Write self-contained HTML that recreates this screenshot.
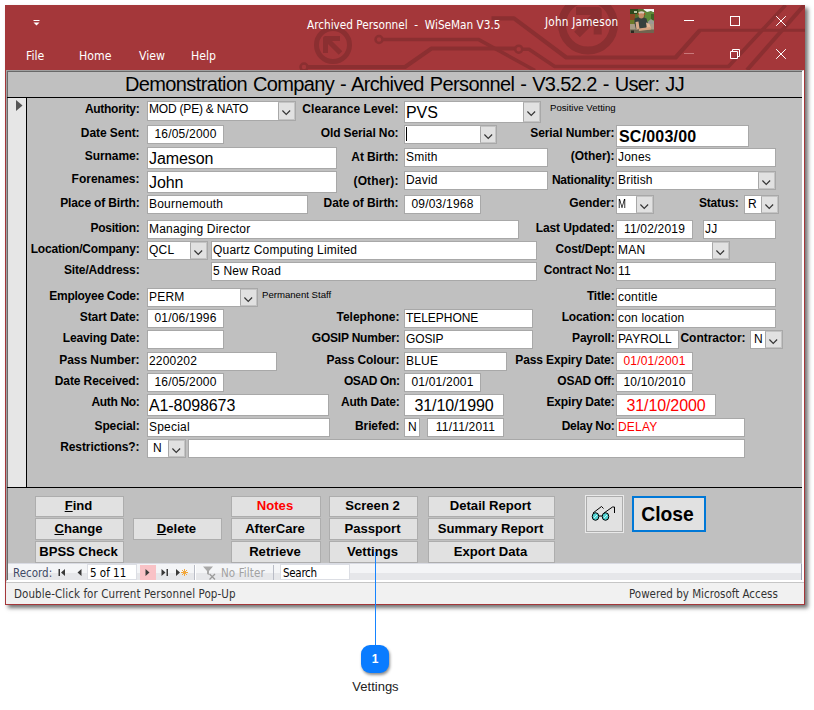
<!DOCTYPE html>
<html lang="en"><head><meta charset="utf-8"><title>Archived Personnel - WiSeMan V3.5</title>
<style>
*{box-sizing:border-box;margin:0;padding:0}
html,body{width:814px;height:710px;background:#fff;overflow:hidden}
body{position:relative;font-family:"Liberation Sans",Arial,sans-serif;font-size:12px;color:#000}
.a{position:absolute;white-space:pre}
#win{left:5px;top:5px;width:800px;height:600px;background:#a4373a;box-shadow:3px 3px 4px 0 rgba(0,0,0,.55)}
.tt{color:#fff;font-family:'DejaVu Sans Condensed','Liberation Sans',sans-serif;font-size:11.7px;line-height:16px}
.mn{color:#fff;font-family:'DejaVu Sans Condensed','Liberation Sans',sans-serif;font-size:12.2px;line-height:16px}
#form{left:1px;top:65px;width:798px;height:512px;background:#c0c0c0;border-left:1px solid #a0a0a0;border-top:1px solid #a0a0a0;border-right:2px solid #fff;border-bottom:2px solid #fff}
.f{background:#fff;border:1px solid #a8a8a8;font-size:12px;line-height:14px;padding-left:1px;overflow:hidden;letter-spacing:0.2px}
.l{font-weight:bold;font-size:12px;line-height:14px;text-align:right;letter-spacing:-0.25px}
.cb{background:#e1e1e1;border:1px solid #c4c4c4;border-left-color:#a8a8a8}
.b{background:#e1e1e1;border:1px solid #adadad;font-weight:bold;font-size:13.1px;line-height:18px;text-align:center;padding-right:2px}
.r{color:#f00}
.c{text-align:center;padding-left:0}
u{text-decoration-thickness:1px;text-underline-offset:1px}
</style></head>
<body>
<div id="win" class="a">
<svg class="a" style="left:0;top:0" width="800" height="65" viewBox="0 0 800 65" fill="none" stroke="#8b2f31" stroke-width="4" stroke-linejoin="round">
<circle cx="328" cy="40" r="16.5" stroke-width="5"/><path d="M335.5 48 L322 34.5 M320.5 48 V33.5 H335" stroke-width="5"/>
<circle cx="374" cy="34.5" r="3.5" stroke-width="2.5"/><path d="M378 34.600 H473.800 L530 65.5" stroke-width="3.5"/>
<circle cx="299" cy="62" r="3.5" stroke-width="2.5"/><path d="M303 62 H400 L426.5 43.5 H510" stroke-width="4"/>
<circle cx="513.700" cy="44.200" r="3.5" stroke-width="2.5"/><path d="M517.700 44.200 H524 L549.700 61.5 H723.5 L780.600 0" stroke-width="3.600"/>
<path d="M486.5 13.400 H509 L561.300 52.5 H670.600 L694.700 25.300" stroke-width="4.200"/><path d="M693.5 25.300 H800" stroke-width="3"/>
<circle cx="583" cy="19.600" r="26" stroke-width="8"/><path d="M572 29.5 L590.5 11 M571 6 H592.700 V29.5" stroke-width="8"/>
<path d="M742 65 L799.300 0" stroke-width="4"/>
</svg>
<svg class="a" style="left:28px;top:14px" width="8" height="8" viewBox="0 0 8 8"><rect x="0.5" y="1" width="6" height="1" fill="#fff"/><path d="M0.5 3.5 H6.5 L3.5 6.5 Z" fill="#fff"/></svg>
<div class="a tt" style="left:302px;top:12px;letter-spacing:0">Archived Personnel  -  WiSeMan V3.5</div>
<div class="a tt" style="left:540px;top:9px;letter-spacing:0.2px">John Jameson</div>
<svg class="a" style="left:625px;top:4px" width="24" height="24" viewBox="0 0 24 24">
<defs><filter id="bl" x="-10%" y="-10%" width="120%" height="120%"><feGaussianBlur stdDeviation="0.550"/></filter><clipPath id="av"><rect width="24" height="24"/></clipPath></defs>
<g clip-path="url(#av)"><rect width="24" height="24" fill="#55702f"/><g filter="url(#bl)">
<rect x="-1" y="-1" width="9" height="6" fill="#2f4a1c"/><rect x="4" y="2" width="3" height="2" fill="#b9c3a0"/>
<path d="M13 -1 H25 V4 L21 2 L17 3 L14 1 Z" fill="#f4f6f4"/>
<rect x="15" y="3" width="10" height="10" fill="#5f8a38"/><rect x="21" y="5" width="4" height="6" fill="#3f6426"/>
<rect x="-1" y="5" width="6" height="7" fill="#8b4722"/><rect x="-1" y="11" width="6" height="4" fill="#6d7a2c"/>
<path d="M17.5 13 L21 10 L25 13 V19 H17.5 Z" fill="#9c9a92"/>
<rect x="-1" y="15" width="26" height="6" fill="#a99c86"/><rect x="-1" y="20.5" width="26" height="4.5" fill="#6f644f"/>
<path d="M4.5 9.5 Q10.5 7 16.5 9.5 L18 16 L15 20.5 H6 L4.5 14 Z" fill="#363f3c"/>
<ellipse cx="11.300" cy="6.300" rx="2.700" ry="3.300" fill="#c48a66"/><path d="M8 5 Q8 2.5 11.5 2.200 Q15 2.5 14.700 5 Q11.5 3.600 8 5 Z" fill="#d9cbbd"/>
<rect x="7.600" y="4" width="1.200" height="2" fill="#a8501e"/><rect x="14" y="4" width="1.200" height="2" fill="#a8501e"/>
<path d="M5.5 13 L8.5 12.5 L9.5 19.5 L6.5 21 Z" fill="#d9aa8a"/>
<path d="M16 13.5 L19.5 15 L21 19 L17 20 Z" fill="#e2b898"/>
<path d="M8.5 19.5 L20.5 18 L21 20.5 L9 22 Z" fill="#d3a07e"/>
<rect x="1" y="21.5" width="3" height="2.5" fill="#2a2a24"/></g></g>
</svg>
<svg class="a" style="left:670px;top:4px" width="125" height="56" viewBox="0 0 125 56" fill="none" stroke="#fff" stroke-width="1">
<path d="M9 11.5 H19"/><rect x="55.5" y="7.5" width="9" height="9"/><path d="M101.5 7.5 L110.5 16.5 M110.5 7.5 L101.5 16.5" stroke-linecap="square"/>
<path d="M9 44.5 H19" stroke="#c9787a"/>
<path d="M55.5 42.5 H62.5 V49.5 H55.5 Z M57.5 42.5 V40.5 H64.5 V47.5 H62.5" /><path d="M101.5 40.5 L110.5 49.5 M110.5 40.5 L101.5 49.5" stroke-linecap="square"/>
</svg>
<div class="a mn" style="left:21px;top:43px">File</div>
<div class="a mn" style="left:74px;top:43px">Home</div>
<div class="a mn" style="left:134px;top:43px">View</div>
<div class="a mn" style="left:186px;top:43px">Help</div>
<div id="form" class="a">
<div class="a" style="left:0;top:0;width:795px;height:26px;border-left:1px solid #696969;border-top:1px solid #696969;text-align:center;font-size:20px;line-height:24px;letter-spacing:-0.62px;word-spacing:1px;padding-right:1px">Demonstration Company - Archived Personnel - V3.52.2 - User: JJ</div>
<div class="a" style="left:0;top:26px;width:795px;height:1px;background:#000"></div>
<div class="a" style="left:0;top:27px;width:20px;height:389px;background:#e6e6e6;border-left:1px solid #696969;border-right:1px solid #000"></div>
<svg class="a" style="left:9px;top:29px" width="7" height="11" viewBox="0 0 7 11"><path d="M0 0 L6.5 5.5 L0 11 Z" fill="#555"/></svg>
<div class="a" style="left:0;top:416px;width:795px;height:1px;background:#000"></div>
<div class="a" style="left:0;top:417px;width:1px;height:92px;background:#696969"></div>
<div class="a l" style="right:662.5px;top:31px;letter-spacing:-0.27px;">Authority:</div>
<div class="a f " style="left:140px;top:30px;width:149px;height:20px;line-height:14px;letter-spacing:-0.2px">MOD (PE) &amp; NATO<div class="a cb" style="right:0;top:0;width:17px;height:18px"><svg class="a" style="left:3px;top:7px" width="9" height="6" viewBox="0 0 9 6"><path d="M0.400 0.5 L4.250 4.350 L8.100 0.5" fill="none" stroke="#333" stroke-width="1.150"/></svg></div></div>
<div class="a l" style="right:403.5px;top:31px;letter-spacing:0.05px;">Clearance Level:</div>
<div class="a f " style="left:397px;top:30px;width:137px;height:22px;line-height:22px;font-size:16px;letter-spacing:-0.1px">PVS<div class="a cb" style="right:0;top:0;width:17px;height:20px"><svg class="a" style="left:3px;top:8px" width="9" height="6" viewBox="0 0 9 6"><path d="M0.400 0.5 L4.250 4.350 L8.100 0.5" fill="none" stroke="#333" stroke-width="1.150"/></svg></div></div>
<div class="a" style="left:543px;top:31px;font-size:9.6px;line-height:11px">Positive Vetting</div>
<div class="a l" style="right:662.5px;top:55px;letter-spacing:-0.07px;">Date Sent:</div>
<div class="a f c" style="left:140px;top:54px;width:77px;height:19px;line-height:17px;">16/05/2000</div>
<div class="a l" style="right:403.5px;top:55px;letter-spacing:-0.11px;">Old Serial No:</div>
<div class="a f " style="left:397px;top:54px;width:93px;height:19px;line-height:17px;"><div class="a cb" style="right:0;top:0;width:16px;height:17px"><svg class="a" style="left:3px;top:7px" width="9" height="6" viewBox="0 0 9 6"><path d="M0.400 0.5 L4.250 4.350 L8.100 0.5" fill="none" stroke="#333" stroke-width="1.150"/></svg></div></div>
<div class="a" style="left:399px;top:56px;width:1px;height:14px;background:#000"></div>
<div class="a l" style="right:187.5px;top:55px;letter-spacing:-0.08px;">Serial Number:</div>
<div class="a f " style="left:609px;top:54px;width:133px;height:22px;line-height:22px;font-weight:bold;font-size:16px;padding-left:2px">SC/003/00</div>
<div class="a l" style="right:662.5px;top:78px;letter-spacing:-0.09px;">Surname:</div>
<div class="a f " style="left:140px;top:76px;width:190px;height:22px;line-height:22px;font-size:16px;letter-spacing:-0.1px">Jameson</div>
<div class="a l" style="right:403.5px;top:79px;letter-spacing:-0.09px;">At Birth:</div>
<div class="a f " style="left:397px;top:77px;width:144px;height:19px;line-height:17px;">Smith</div>
<div class="a l" style="right:187.5px;top:78px;letter-spacing:-0.02px;">(Other):</div>
<div class="a f " style="left:609px;top:77px;width:160px;height:19px;line-height:17px;">Jones</div>
<div class="a l" style="right:662.5px;top:101px;letter-spacing:-0.01px;">Forenames:</div>
<div class="a f " style="left:140px;top:100px;width:190px;height:22px;line-height:22px;font-size:16px;letter-spacing:-0.1px">John</div>
<div class="a l" style="right:403.5px;top:103px;letter-spacing:0.12px;">(Other):</div>
<div class="a f " style="left:397px;top:100px;width:144px;height:19px;line-height:17px;">David</div>
<div class="a l" style="right:187.5px;top:102px;letter-spacing:-0.23px;">Nationality:</div>
<div class="a f " style="left:609px;top:100px;width:160px;height:19px;line-height:17px;">British<div class="a cb" style="right:0;top:0;width:17px;height:17px"><svg class="a" style="left:3px;top:7px" width="9" height="6" viewBox="0 0 9 6"><path d="M0.400 0.5 L4.250 4.350 L8.100 0.5" fill="none" stroke="#333" stroke-width="1.150"/></svg></div></div>
<div class="a l" style="right:662.5px;top:125px;letter-spacing:-0.14px;">Place of Birth:</div>
<div class="a f " style="left:140px;top:124px;width:161px;height:19px;line-height:17px;">Bournemouth</div>
<div class="a l" style="right:403.5px;top:125px;letter-spacing:-0.08px;">Date of Birth:</div>
<div class="a f c" style="left:397px;top:124px;width:77px;height:19px;line-height:17px;">09/03/1968</div>
<div class="a l" style="right:187.5px;top:125px;letter-spacing:-0.10px;">Gender:</div>
<div class="a f " style="left:609px;top:124px;width:38px;height:19px;line-height:17px;"><span style="display:inline-block;transform:scaleX(.8);transform-origin:0 50%">M</span><div class="a cb" style="right:0;top:0;width:17px;height:17px"><svg class="a" style="left:3px;top:7px" width="9" height="6" viewBox="0 0 9 6"><path d="M0.400 0.5 L4.250 4.350 L8.100 0.5" fill="none" stroke="#333" stroke-width="1.150"/></svg></div></div>
<div class="a l" style="right:63.5px;top:125px;letter-spacing:-0.15px;">Status:</div>
<div class="a f " style="left:737px;top:124px;width:35px;height:19px;line-height:17px;padding-left:3px">R<div class="a cb" style="right:0;top:0;width:17px;height:17px"><svg class="a" style="left:3px;top:7px" width="9" height="6" viewBox="0 0 9 6"><path d="M0.400 0.5 L4.250 4.350 L8.100 0.5" fill="none" stroke="#333" stroke-width="1.150"/></svg></div></div>
<div class="a l" style="right:662.5px;top:150px;letter-spacing:-0.25px;">Position:</div>
<div class="a f " style="left:140px;top:149px;width:372px;height:19px;line-height:17px;">Managing Director</div>
<div class="a l" style="right:187.5px;top:150px;letter-spacing:-0.09px;">Last Updated:</div>
<div class="a f c" style="left:609px;top:149px;width:77px;height:19px;line-height:17px;">11/02/2019</div>
<div class="a f " style="left:696px;top:149px;width:73px;height:19px;line-height:17px;">JJ</div>
<div class="a l" style="right:662.5px;top:171px;letter-spacing:-0.19px;">Location/Company:</div>
<div class="a f " style="left:140px;top:170px;width:61px;height:19px;line-height:17px;">QCL<div class="a cb" style="right:0;top:0;width:17px;height:17px"><svg class="a" style="left:3px;top:7px" width="9" height="6" viewBox="0 0 9 6"><path d="M0.400 0.5 L4.250 4.350 L8.100 0.5" fill="none" stroke="#333" stroke-width="1.150"/></svg></div></div>
<div class="a f " style="left:204px;top:170px;width:326px;height:19px;line-height:17px;">Quartz Computing Limited</div>
<div class="a l" style="right:187.5px;top:171px;letter-spacing:-0.17px;">Cost/Dept:</div>
<div class="a f " style="left:609px;top:170px;width:114px;height:19px;line-height:17px;">MAN<div class="a cb" style="right:0;top:0;width:17px;height:17px"><svg class="a" style="left:3px;top:7px" width="9" height="6" viewBox="0 0 9 6"><path d="M0.400 0.5 L4.250 4.350 L8.100 0.5" fill="none" stroke="#333" stroke-width="1.150"/></svg></div></div>
<div class="a l" style="right:662.5px;top:192px;letter-spacing:-0.14px;">Site/Address:</div>
<div class="a f " style="left:204px;top:191px;width:326px;height:19px;line-height:17px;">5 New Road</div>
<div class="a l" style="right:187.5px;top:192px;letter-spacing:-0.15px;">Contract No:</div>
<div class="a f " style="left:609px;top:191px;width:160px;height:19px;line-height:17px;">11</div>
<div class="a l" style="right:662.5px;top:218px;letter-spacing:-0.27px;">Employee Code:</div>
<div class="a f " style="left:140px;top:217px;width:111px;height:19px;line-height:17px;">PERM<div class="a cb" style="right:0;top:0;width:17px;height:17px"><svg class="a" style="left:3px;top:7px" width="9" height="6" viewBox="0 0 9 6"><path d="M0.400 0.5 L4.250 4.350 L8.100 0.5" fill="none" stroke="#333" stroke-width="1.150"/></svg></div></div>
<div class="a" style="left:255px;top:218px;font-size:9.6px;line-height:11px">Permanent Staff</div>
<div class="a l" style="right:187.5px;top:218px;letter-spacing:-0.14px;">Title:</div>
<div class="a f " style="left:609px;top:217px;width:160px;height:19px;line-height:17px;">contitle</div>
<div class="a l" style="right:662.5px;top:239px;letter-spacing:-0.09px;">Start Date:</div>
<div class="a f c" style="left:140px;top:238px;width:77px;height:19px;line-height:17px;">01/06/1996</div>
<div class="a l" style="right:402.5px;top:239px;letter-spacing:-0.01px;">Telephone:</div>
<div class="a f " style="left:397px;top:238px;width:129px;height:19px;line-height:17px;letter-spacing:-0.05px">TELEPHONE</div>
<div class="a l" style="right:187.5px;top:239px;letter-spacing:-0.13px;">Location:</div>
<div class="a f " style="left:609px;top:238px;width:160px;height:19px;line-height:17px;">con location</div>
<div class="a l" style="right:662.5px;top:260px;letter-spacing:-0.15px;">Leaving Date:</div>
<div class="a f " style="left:140px;top:259px;width:77px;height:19px;line-height:17px;"></div>
<div class="a l" style="right:402.5px;top:260px;letter-spacing:-0.21px;">GOSIP Number:</div>
<div class="a f " style="left:397px;top:259px;width:129px;height:19px;line-height:17px;letter-spacing:-0.1px">GOSIP</div>
<div class="a l" style="right:187.5px;top:260px;letter-spacing:-0.20px;">Payroll:</div>
<div class="a f " style="left:609px;top:259px;width:63px;height:19px;line-height:17px;letter-spacing:0">PAYROLL</div>
<div class="a l" style="right:56.5px;top:260px;letter-spacing:-0.03px;">Contractor:</div>
<div class="a f " style="left:743px;top:259px;width:33px;height:19px;line-height:17px;padding-left:3px">N<div class="a cb" style="right:0;top:0;width:17px;height:17px"><svg class="a" style="left:3px;top:7px" width="9" height="6" viewBox="0 0 9 6"><path d="M0.400 0.5 L4.250 4.350 L8.100 0.5" fill="none" stroke="#333" stroke-width="1.150"/></svg></div></div>
<div class="a l" style="right:662.5px;top:282px;letter-spacing:-0.03px;">Pass Number:</div>
<div class="a f " style="left:140px;top:281px;width:130px;height:19px;line-height:17px;">2200202</div>
<div class="a l" style="right:402.5px;top:282px;letter-spacing:-0.09px;">Pass Colour:</div>
<div class="a f " style="left:397px;top:281px;width:103px;height:19px;line-height:17px;">BLUE</div>
<div class="a l" style="right:187.5px;top:282px;letter-spacing:-0.13px;">Pass Expiry Date:</div>
<div class="a f c r" style="left:609px;top:281px;width:77px;height:19px;line-height:17px;">01/01/2001</div>
<div class="a l" style="right:662.5px;top:303px;letter-spacing:-0.09px;">Date Received:</div>
<div class="a f c" style="left:140px;top:302px;width:77px;height:19px;line-height:17px;">16/05/2000</div>
<div class="a l" style="right:402.5px;top:303px;letter-spacing:-0.38px;">OSAD On:</div>
<div class="a f c" style="left:397px;top:302px;width:77px;height:19px;line-height:17px;">01/01/2001</div>
<div class="a l" style="right:187.5px;top:303px;letter-spacing:-0.24px;">OSAD Off:</div>
<div class="a f c" style="left:609px;top:302px;width:77px;height:19px;line-height:17px;">10/10/2010</div>
<div class="a l" style="right:662.5px;top:324px;letter-spacing:-0.33px;">Auth No:</div>
<div class="a f " style="left:140px;top:323px;width:182px;height:22px;line-height:22px;font-size:16px;letter-spacing:-0.1px">A1-8098673</div>
<div class="a l" style="right:402.5px;top:324px;letter-spacing:-0.22px;">Auth Date:</div>
<div class="a f c" style="left:397px;top:323px;width:100px;height:22px;line-height:22px;font-size:16px;letter-spacing:-0.1px">31/10/1990</div>
<div class="a l" style="right:187.5px;top:324px;letter-spacing:-0.17px;">Expiry Date:</div>
<div class="a f c r" style="left:609px;top:323px;width:100px;height:22px;line-height:22px;font-size:16px;letter-spacing:-0.1px">31/10/2000</div>
<div class="a l" style="right:662.5px;top:348px;letter-spacing:-0.13px;">Special:</div>
<div class="a f " style="left:140px;top:347px;width:183px;height:19px;line-height:17px;">Special</div>
<div class="a l" style="right:402.5px;top:348px;letter-spacing:-0.11px;">Briefed:</div>
<div class="a f " style="left:397px;top:347px;width:16px;height:19px;line-height:17px;padding-left:3px">N</div>
<div class="a f c" style="left:420px;top:347px;width:77px;height:19px;line-height:17px;">11/11/2011</div>
<div class="a l" style="right:187.5px;top:348px;letter-spacing:-0.28px;">Delay No:</div>
<div class="a f r" style="left:609px;top:347px;width:129px;height:19px;line-height:17px;">DELAY</div>
<div class="a l" style="right:662.5px;top:369px;letter-spacing:-0.10px;">Restrictions?:</div>
<div class="a f " style="left:140px;top:368px;width:39px;height:19px;line-height:17px;padding-left:5px">N<div class="a cb" style="right:0;top:0;width:17px;height:17px"><svg class="a" style="left:3px;top:7px" width="9" height="6" viewBox="0 0 9 6"><path d="M0.400 0.5 L4.250 4.350 L8.100 0.5" fill="none" stroke="#333" stroke-width="1.150"/></svg></div></div>
<div class="a f " style="left:181px;top:368px;width:557px;height:19px;line-height:17px;"></div>
<div class="a b " style="left:28px;top:425px;width:89px;height:21px;line-height:18px"><u>F</u>ind</div>
<div class="a b " style="left:28px;top:447px;width:89px;height:22px;line-height:19px"><u>C</u>hange</div>
<div class="a b " style="left:28px;top:470px;width:89px;height:22px;line-height:19px">BPSS Check</div>
<div class="a b " style="left:126px;top:447px;width:89px;height:22px;line-height:19px"><u>D</u>elete</div>
<div class="a b r" style="left:224px;top:425px;width:90px;height:21px;line-height:18px">Notes</div>
<div class="a b " style="left:224px;top:447px;width:90px;height:22px;line-height:19px">AfterCare</div>
<div class="a b " style="left:224px;top:470px;width:90px;height:22px;line-height:19px">Retrieve</div>
<div class="a b " style="left:322px;top:425px;width:89px;height:21px;line-height:18px">Screen 2</div>
<div class="a b " style="left:322px;top:447px;width:89px;height:22px;line-height:19px">Passport</div>
<div class="a b " style="left:322px;top:470px;width:89px;height:22px;line-height:19px">Vettings</div>
<div class="a b " style="left:421px;top:425px;width:127px;height:21px;line-height:18px">Detail Report</div>
<div class="a b " style="left:421px;top:447px;width:127px;height:22px;line-height:19px">Summary Report</div>
<div class="a b " style="left:421px;top:470px;width:127px;height:22px;line-height:19px">Export Data</div>
<div class="a" style="left:578px;top:424px;width:39px;height:38px;background:#e1e1e1;border:1px solid #e9e9e9;box-shadow:inset 0 0 0 1px #adadad"><svg class="a" style="left:4px;top:7px" width="28" height="20" viewBox="0 0 28 20" fill="none" stroke="#000" stroke-width="1">
<ellipse cx="5.5" cy="13.5" rx="3.300" ry="3.800" fill="#4fd0d0"/><ellipse cx="15.5" cy="13.5" rx="3.300" ry="3.800" fill="#4fd0d0"/>
<path d="M3 10 L11.5 3.5 L13.5 5.5"/><path d="M14 10 L22.5 4 H24.5 V10"/><path d="M9 13 H12"/>
<path d="M4 15 L7 12 M14 15 L17 12" stroke="#e8ffff" stroke-width="0.800"/></svg></div>
<div class="a b" style="left:625px;top:425px;width:74px;height:36px;border:2px solid #0078d7;font-size:19.3px;line-height:34px;padding-right:3px">Close</div>
</div>
<div class="a" style="left:3px;top:558px;width:794px;height:17px;background:linear-gradient(#f4f5f7 0,#f4f5f7 9px,#e6e7ea 9px,#e6e7ea 100%);border-right:1px solid #a0a4b4;border-top:1px solid #d9dbe3"></div>
<div class="a" style="left:8px;top:560px;font-family:'DejaVu Sans Condensed','Liberation Sans',sans-serif;font-size:11.5px;line-height:16px;color:#3f4a66">Record:</div>
<svg class="a" style="left:50px;top:558px" width="150" height="18" viewBox="0 0 150 18">
<rect x="85" y="2" width="16" height="15" fill="#f9c2c6"/>
<path d="M3.5 6 h1.5 v7 h-1.5 Z M10 6 v7 l-4 -3.5 Z M26.5 6 v7 l-4 -3.5 Z M90.5 6 v7 l4 -3.5 Z M106.5 6 v7 l4 -3.5 Z M111.5 6 h1.5 v7 h-1.5 Z M121 6 v7 l4 -3.5 Z" fill="#3a3a3a"/>
<path d="M129.5 6 v7 M126 9.5 h7 M127 7 l5 5 M132 7 l-5 5" stroke="#f2a73c" stroke-width="1" fill="none"/>
<path d="M139.5 2 v15" stroke="#b9bcc6"/><path d="M140.5 2 v15" stroke="#fff"/>
<path d="M218.5 2 v15" stroke="#b9bcc6"/>
</svg>
<div class="a" style="left:82px;top:559px;width:50px;height:16px;background:#fff;border:1px solid #dcdee4;font-family:'DejaVu Sans Condensed','Liberation Sans',sans-serif;font-size:11.5px;line-height:16px;padding-left:2px">5 of 11</div>
<svg class="a" style="left:197px;top:561px" width="18" height="14" viewBox="0 0 18 14"><path d="M1 0.5 H11 L7 5 V9 L5 8 V5 Z" fill="#a9a9a9"/><path d="M7.5 8 L13 13.5 M13 8 L7.5 13.5" stroke="#9a9a9a" stroke-width="1.300"/></svg>
<div class="a" style="left:216px;top:560px;font-family:'DejaVu Sans Condensed','Liberation Sans',sans-serif;font-size:11.5px;line-height:16px;color:#a2a2a2;letter-spacing:0.1px">No Filter</div>
<div class="a" style="left:268px;top:560px;width:1px;height:15px;background:#b9bcc6"></div>
<div class="a" style="left:275px;top:559px;width:70px;height:16px;background:#fff;border:1px solid #dcdee4;font-family:'DejaVu Sans Condensed','Liberation Sans',sans-serif;font-size:11.5px;line-height:16px;padding-left:2px;letter-spacing:-0.3px">Search</div>
<div class="a" style="left:1px;top:577px;width:798px;height:22px;background:#f1f1f1;border-top:1px solid #c6c6c6"></div>
<div class="a" style="left:9px;top:581px;font-family:'DejaVu Sans Condensed','Liberation Sans',sans-serif;font-size:11.5px;line-height:16px;color:#333;letter-spacing:0.08px">Double-Click for Current Personnel Pop-Up</div>
<div class="a" style="left:624px;top:581px;font-family:'DejaVu Sans Condensed','Liberation Sans',sans-serif;font-size:11.5px;line-height:16px;color:#333">Powered by Microsoft Access</div>
</div>
<div class="a" style="left:374.8px;top:552px;width:1.4px;height:94px;background:#1684ff"></div>
<div class="a" style="left:361px;top:645px;width:28px;height:28px;border-radius:9px;background:#0a7cff;box-shadow:1px 2px 3px rgba(0,0,0,.45);color:#fff;font-weight:bold;font-size:12px;line-height:28px;text-align:center">1</div>
<div class="a" style="left:325.5px;top:679px;width:100px;text-align:center;font-size:13px;line-height:16px;color:#222">Vettings</div>
</body></html>
